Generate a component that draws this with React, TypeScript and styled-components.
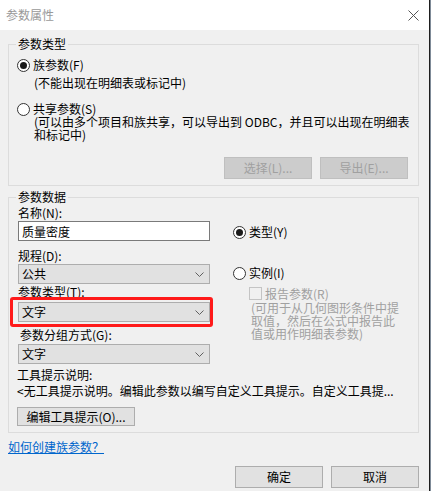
import React from 'react';
import styled, { createGlobalStyle } from 'styled-components';

const GlobalStyle = createGlobalStyle`
  body {
    margin: 0;
    background: #ffffff;
    font-family: "Noto Sans CJK SC", "DejaVu Sans", sans-serif;
    font-size: 12px;
    color: #000000;
  }
`;

const Frame = styled.div`
  display: flex;
  width: 431px;
  height: 491px;
  overflow: hidden;
`;

const Dialog = styled.div`
  display: flex;
  flex-direction: column;
  width: 429px;
  background: #f0f0f0;
`;

const Edge = styled.div`
  width: 1px;
  background: #7f8b98;
  border-left: 1px solid #1e1e1e;
`;

const TitleBar = styled.div`
  display: flex;
  align-items: center;
  justify-content: space-between;
  height: 30px;
  padding: 0 10px 0 6px;
  background: #ffffff;
  color: #999999;
  line-height: 14px;
`;

const Body = styled.div`
  display: flex;
  flex-direction: column;
  padding: 0 10px 0 8px;
`;

const Group = styled.div<{ $height: number; $top: number }>`
  position: relative;
  display: flex;
  flex-direction: column;
  box-sizing: border-box;
  height: ${(p) => p.$height}px;
  margin-top: ${(p) => p.$top}px;
  padding-left: 8px;
  border: 1px solid #dcdcdc;
`;

const Legend = styled.span`
  position: absolute;
  top: -8px;
  left: 7px;
  padding: 0 2px;
  background: #f0f0f0;
  line-height: 14px;
`;

const RadioRow = styled.label<{ $top: number }>`
  display: flex;
  align-items: center;
  gap: 3px;
  height: 14px;
  margin-top: ${(p) => p.$top}px;
  line-height: 14px;
  white-space: nowrap;
`;

const RadioMark = styled.span<{ $checked?: boolean }>`
  display: flex;
  align-items: center;
  justify-content: center;
  box-sizing: border-box;
  width: 13px;
  height: 13px;
  border: 1px solid #333333;
  border-radius: 50%;
  background: #ffffff;

  &::after {
    content: '';
    display: ${(p) => (p.$checked ? 'block' : 'none')};
    width: 7px;
    height: 7px;
    border-radius: 50%;
    background: #1a1a1a;
  }
`;

const Note = styled.div<{ $top: number; $lh: number; $muted?: boolean; $left?: number }>`
  margin-top: ${(p) => p.$top}px;
  margin-left: ${(p) => p.$left ?? 17}px;
  line-height: ${(p) => p.$lh}px;
  white-space: nowrap;
  color: ${(p) => (p.$muted ? '#a0a0a0' : '#000000')};
`;

const ButtonRow = styled.div<{ $top: number; $align?: string; $pad?: number }>`
  display: flex;
  justify-content: ${(p) => p.$align ?? 'flex-end'};
  gap: 8px;
  margin-top: ${(p) => p.$top}px;
  padding-right: ${(p) => p.$pad ?? 10}px;
`;

const Button = styled.button<{ $width: number; $height: number; $disabled?: boolean }>`
  box-sizing: border-box;
  width: ${(p) => p.$width}px;
  height: ${(p) => p.$height}px;
  padding: 0;
  font-family: inherit;
  font-size: 12px;
  line-height: 14px;
  color: ${(p) => (p.$disabled ? '#a0a0a0' : '#000000')};
  background: ${(p) => (p.$disabled ? '#cccccc' : '#e1e1e1')};
  border: 1px solid ${(p) => (p.$disabled ? '#bfbfbf' : '#adadad')};
  border-radius: 0;
`;

const Columns = styled.div`
  display: flex;
`;

const LeftCol = styled.div`
  display: flex;
  flex-direction: column;
  width: 192px;
  padding-left: 1px;
`;

const RightCol = styled.div`
  display: flex;
  flex-direction: column;
  margin-left: 23px;
`;

const Label = styled.div<{ $top: number; $left?: number }>`
  height: 14px;
  margin-top: ${(p) => p.$top}px;
  padding-left: ${(p) => p.$left ?? 0}px;
  line-height: 14px;
  white-space: nowrap;
`;

const TextInput = styled.div<{ $top: number }>`
  display: flex;
  align-items: center;
  box-sizing: border-box;
  height: 20px;
  margin-top: ${(p) => p.$top}px;
  padding-left: 3px;
  background: #ffffff;
  border: 1px solid #7a7a7a;
`;

const Highlight = styled.div<{ $top: number }>`
  position: relative;
  margin-top: ${(p) => p.$top}px;

  &::after {
    content: '';
    position: absolute;
    top: -5px;
    left: -8px;
    right: -3px;
    bottom: -5px;
    border: 3px solid #ff1a1a;
    border-radius: 3px;
    pointer-events: none;
  }
`;

const SelectBox = styled.div<{ $top?: number }>`
  display: flex;
  align-items: center;
  justify-content: space-between;
  box-sizing: border-box;
  height: 20px;
  margin-top: ${(p) => p.$top ?? 0}px;
  padding: 0 5px 0 3px;
  background: #e1e1e1;
  border: 1px solid #adadad;
  line-height: 14px;
`;

const CheckRow = styled.div`
  display: flex;
  align-items: center;
  gap: 3px;
  height: 14px;
  margin-top: 6px;
  padding-left: 16px;
  color: #a0a0a0;
  white-space: nowrap;
`;

const CheckMark = styled.span`
  box-sizing: border-box;
  width: 13px;
  height: 13px;
  border: 1px solid #c4c4c4;
  background: #f0f0f0;
`;

const HelpLink = styled.a`
  align-self: flex-start;
  margin-top: 7px;
  line-height: 14px;
  color: #0066cc;
  text-decoration: underline;
`;

function Chevron(): JSX.Element {
  return (
    <svg width="9" height="5" viewBox="0 0 9 5">
      <polyline points="0.5,0.5 4.5,4.5 8.5,0.5" fill="none" stroke="#606060" strokeWidth="1" />
    </svg>
  );
}

function Select({ value, top }: { value: string; top?: number }): JSX.Element {
  return (
    <SelectBox $top={top}>
      <span>{value}</span>
      <Chevron />
    </SelectBox>
  );
}

export default function App(): JSX.Element {
  return (
    <Frame>
      <GlobalStyle />
      <Dialog>
        <TitleBar>
          <span>参数属性</span>
          <svg width="11" height="11" viewBox="0 0 11 11">
            <path d="M0.5 0.5 L10.5 10.5 M10.5 0.5 L0.5 10.5" stroke="#555555" strokeWidth="1" />
          </svg>
        </TitleBar>

        <Body>
          <Group $height={142} $top={14}>
            <Legend>参数类型</Legend>
            <RadioRow $top={13}>
              <RadioMark $checked />
              族参数(F)
            </RadioRow>
            <Note $top={4} $lh={14}>(不能出现在明细表或标记中)</Note>
            <RadioRow $top={12}>
              <RadioMark />
              共享参数(S)
            </RadioRow>
            <Note $top={0} $lh={12.5}>
              (可以由多个项目和族共享，可以导出到 ODBC，并且可以出现在明细表
              <br />
              和标记中)
            </Note>
            <ButtonRow $top={16}>
              <Button $width={88} $height={22} $disabled>选择(L)...</Button>
              <Button $width={88} $height={22} $disabled>导出(E)...</Button>
            </ButtonRow>
          </Group>

          <Group $height={236} $top={11}>
            <Legend>参数数据</Legend>
            <Columns>
              <LeftCol>
                <Label $top={8}>名称(N):</Label>
                <TextInput $top={1}>质量密度</TextInput>
                <Label $top={8}>规程(D):</Label>
                <Select value="公共" top={1} />
                <Label $top={1}>参数类型(T):</Label>
                <Highlight $top={3}>
                  <Select value="文字" />
                </Highlight>
                <Label $top={6} $left={2}>参数分组方式(G):</Label>
                <Select value="文字" top={2} />
              </LeftCol>
              <RightCol>
                <RadioRow $top={27}>
                  <RadioMark $checked />
                  类型(Y)
                </RadioRow>
                <RadioRow $top={27}>
                  <RadioMark />
                  实例(I)
                </RadioRow>
                <CheckRow>
                  <CheckMark />
                  报告参数(R)
                </CheckRow>
                <Note $top={1} $lh={13} $left={18} $muted>
                  (可用于从几何图形条件中提
                  <br />
                  取值，然后在公式中报告此
                  <br />
                  值或用作明细表参数)
                </Note>
              </RightCol>
            </Columns>
            <Label $top={4}>工具提示说明:</Label>
            <Label $top={2}>&lt;无工具提示说明。编辑此参数以编写自定义工具提示。自定义工具提...</Label>
            <ButtonRow $top={9} $align="flex-start">
              <Button $width={118} $height={19}>编辑工具提示(O)...</Button>
            </ButtonRow>
          </Group>

          <HelpLink href="#">如何创建族参数？</HelpLink>

          <ButtonRow $top={12} $pad={0}>
            <Button $width={88} $height={22}>确定</Button>
            <Button $width={88} $height={22}>取消</Button>
          </ButtonRow>
        </Body>
      </Dialog>
      <Edge />
    </Frame>
  );
}
